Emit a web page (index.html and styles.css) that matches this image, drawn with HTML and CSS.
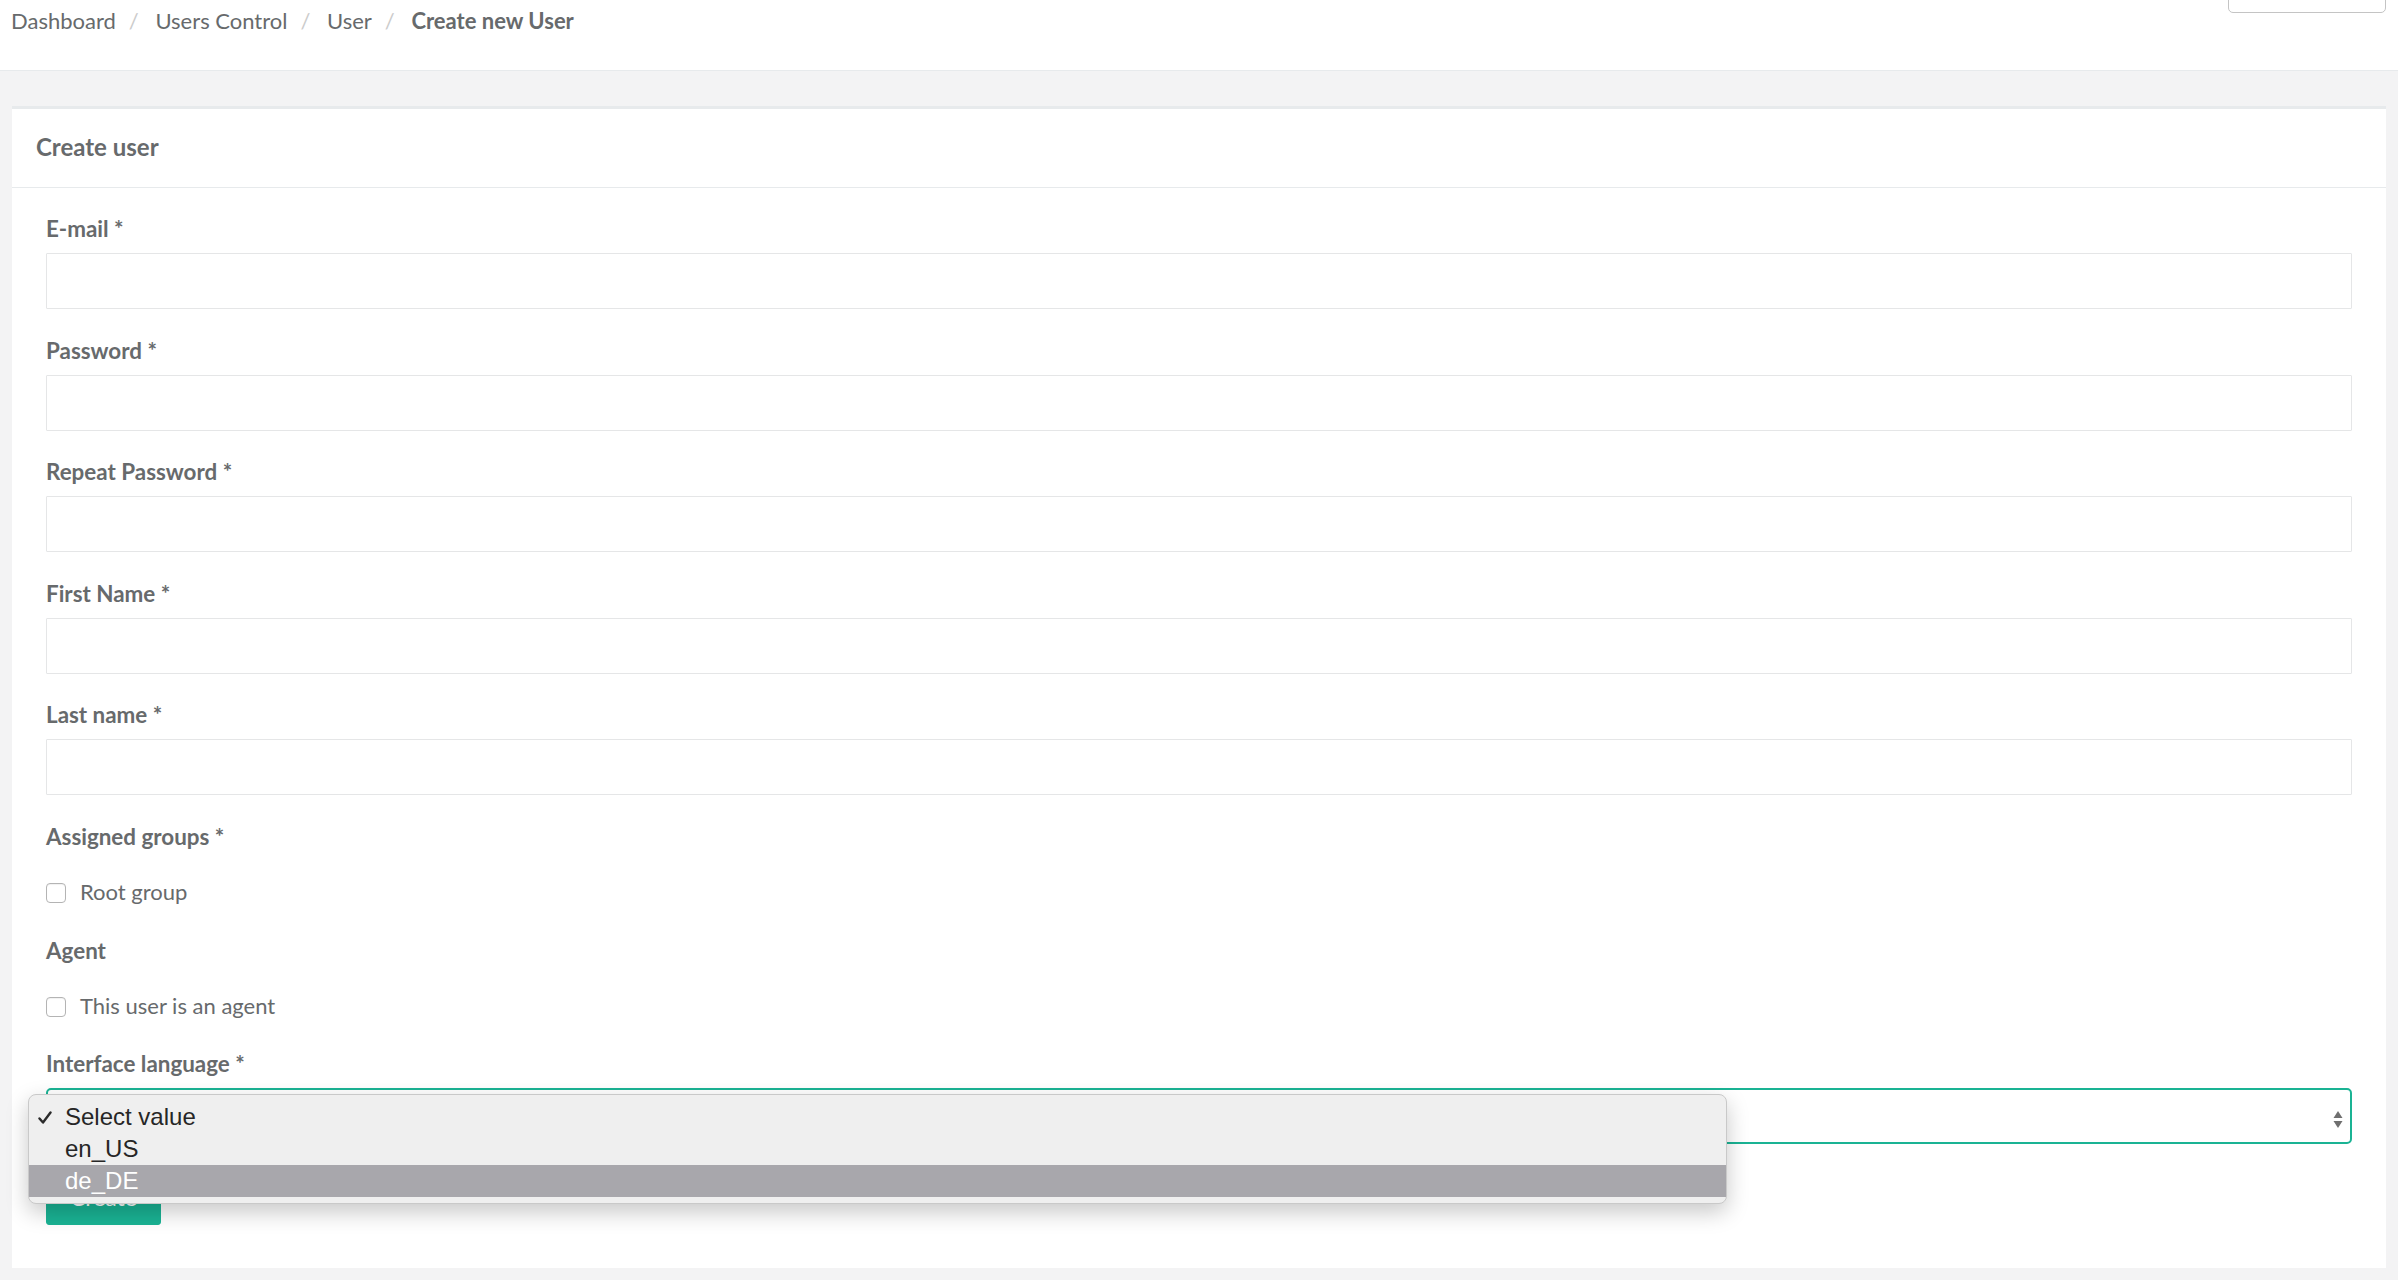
FILE: index.html
```html
<!DOCTYPE html>
<html lang="en">
<head>
    <meta charset="UTF-8">
    <meta name="viewport" content="width=device-width, initial-scale=1.0">
    <title>Create new User</title>
    <link rel="stylesheet" href="styles.css">
</head>
<body>

<header class="page-heading">
    <ol class="breadcrumb">
        <li><a href="#">Dashboard</a></li>
        <li><a href="#">Users Control</a></li>
        <li><a href="#">User</a></li>
        <li class="active"><strong>Create new User</strong></li>
    </ol>
    <button class="heading-btn" type="button"></button>
</header>

<div class="wrapper">
    <div class="ibox">
        <div class="ibox-title">
            <h5>Create user</h5>
        </div>
        <div class="ibox-content">
            <form>
                <!-- Text fields -->
                <div class="form-group">
                    <label for="email">E-mail *</label>
                    <input class="form-control" type="email" id="email">
                </div>
                <div class="form-group">
                    <label for="password">Password *</label>
                    <input class="form-control" type="password" id="password">
                </div>
                <div class="form-group">
                    <label for="password2">Repeat Password *</label>
                    <input class="form-control" type="password" id="password2">
                </div>
                <div class="form-group">
                    <label for="firstName">First Name *</label>
                    <input class="form-control" type="text" id="firstName">
                </div>
                <div class="form-group">
                    <label for="lastName">Last name *</label>
                    <input class="form-control" type="text" id="lastName">
                </div>

                <!-- Checkboxes -->
                <div class="form-group">
                    <label>Assigned groups *</label>
                    <div class="checkbox">
                        <input type="checkbox" id="group1">
                        <label for="group1">Root group</label>
                    </div>
                </div>
                <div class="form-group">
                    <label>Agent</label>
                    <div class="checkbox">
                        <input type="checkbox" id="agent">
                        <label for="agent">This user is an agent</label>
                    </div>
                </div>

                <!-- Language select with its open list -->
                <div class="form-group">
                    <label for="language">Interface language *</label>
                    <div class="select-wrap">
                        <select class="form-control select-focus" id="language">
                            <option>Select value</option>
                            <option>en_US</option>
                            <option>de_DE</option>
                        </select>
                        <svg class="select-arrows" width="10" height="17" viewBox="0 0 10 17">
                            <path d="M5 0 L9.5 7 L0.5 7 Z" fill="#6f6f6f"/>
                            <path d="M5 17 L9.5 10 L0.5 10 Z" fill="#6f6f6f"/>
                        </svg>
                        <ul class="select-menu">
                            <li class="checked">
                                <svg class="check" width="14" height="14" viewBox="0 0 14 14">
                                    <path d="M1.5 7.5 L5 11.5 L12.5 1.5" fill="none" stroke="#2b2b2b" stroke-width="2.4" stroke-linecap="round" stroke-linejoin="round"/>
                                </svg>
                                Select value
                            </li>
                            <li>en_US</li>
                            <li class="hover">de_DE</li>
                        </ul>
                    </div>
                </div>

                <button class="btn-primary" type="submit">Create</button>
            </form>
        </div>
    </div>
</div>

</body>
</html>
```

FILE: styles.css
```css
* {
    box-sizing: border-box;
}
body {
    margin: 0;
    background-color: #f3f3f4;
    font-family: Lato, "Open Sans", sans-serif;
    color: #676a6c;
}
.page-heading {
    display: flex;
    justify-content: space-between;
    align-items: flex-start;
    height: 71px;
    padding: 6px 12px 0 11px;
    background-color: #fff;
    border-bottom: 1px solid #e7eaec;
}
.breadcrumb {
    display: flex;
    margin: 0;
    padding: 0;
    list-style: none;
    font-size: 22px;
    line-height: 30px;
}
.breadcrumb a {
    color: #676a6c;
    text-decoration: none;
}
.breadcrumb li + li::before {
    content: "/\00a0";
    padding: 0 11px 0 13px;
    color: #ccc;
}
.heading-btn {
    width: 158px;
    height: 41px;
    margin-top: -34px;
    background-color: #fff;
    border: 1px solid #c4c4c4;
    border-radius: 5px;
}
.wrapper {
    padding: 35px 12px 11px 12px;
}
.ibox {
    background-color: #fff;
    border-top: 3px solid #e7eaec;
}
.ibox-title {
    padding: 21px 24px 24px;
    border-bottom: 1px solid #e7eaec;
}
.ibox-title h5 {
    margin: 0;
    font-size: 24px;
    line-height: 33px;
    font-weight: 700;
}
.ibox-content {
    padding: 24px 34px 43px 34px;
}
.form-group {
    margin-bottom: 24.6px;
}
.form-group > label {
    display: block;
    margin-bottom: 8px;
    font-size: 22.4px;
    line-height: 33px;
    font-weight: 700;
}
.form-control {
    display: block;
    width: 100%;
    height: 56px;
    padding: 0 18px;
    background-color: #fff;
    border: 1px solid #e5e6e7;
    border-radius: 1px;
    font-family: inherit;
    font-size: 23px;
    color: #676a6c;
}
.checkbox {
    display: flex;
    align-items: center;
    margin-top: 22px;
    padding-bottom: 1px;
    font-size: 22px;
    line-height: 33px;
}
.checkbox input {
    appearance: none;
    width: 20px;
    height: 20px;
    margin: 4px 14px 0 0;
    background-color: #fff;
    border: 1px solid #b4b4b4;
    border-radius: 4px;
    box-shadow: inset 0 1px 1px rgba(0, 0, 0, 0.06);
}
.select-wrap {
    position: relative;
}
.select-focus {
    appearance: none;
    border: 2px solid #1ab394;
    border-radius: 5px;
}
.select-arrows {
    position: absolute;
    right: 9px;
    top: 23px;
}
.select-menu {
    position: absolute;
    left: -18px;
    top: 6px;
    width: 1699px;
    margin: 0;
    padding: 6px 0;
    list-style: none;
    background-color: #efefef;
    border: 1px solid #c9c9c9;
    border-radius: 8px;
    box-shadow: 0 8px 22px rgba(0, 0, 0, 0.22);
    font-family: "Liberation Sans", Arial, sans-serif;
    font-size: 24px;
    line-height: 32px;
    color: #262626;
}
.select-menu li {
    position: relative;
    height: 32px;
    padding-left: 36px;
}
.select-menu li.hover {
    background-color: #a8a7ac;
    color: #fff;
}
.select-menu .check {
    position: absolute;
    left: 9px;
    top: 10px;
}
.btn-primary {
    height: 56px;
    padding: 0 23px;
    background-color: #1ab394;
    border: 1px solid #1ab394;
    border-radius: 3px;
    color: #fff;
    font-family: inherit;
    font-size: 23px;
}
```
